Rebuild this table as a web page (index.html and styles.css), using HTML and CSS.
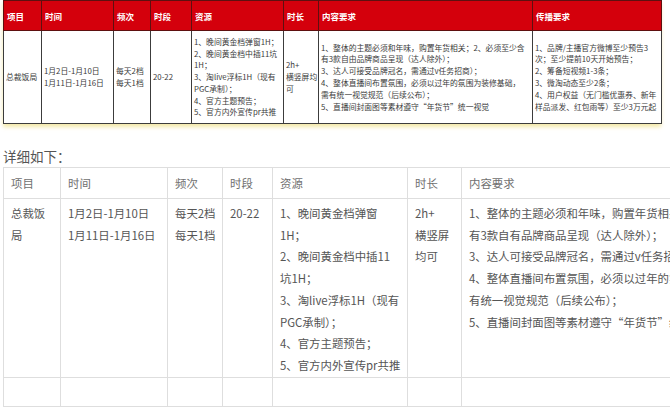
FILE: index.html
```html
<!DOCTYPE html>
<html lang="zh">
<head>
<meta charset="utf-8">
<link rel="stylesheet" href="styles.css">
</head>
<body>
<div class="page">
  <div class="plan-wrap">
    <table class="plan">
      <colgroup>
        <col class="c1"><col class="c2"><col class="c3"><col class="c4"><col class="c5"><col class="c6"><col class="c7"><col class="c8">
      </colgroup>
      <thead>
        <tr>
          <th>项目</th><th>时间</th><th>频次</th><th>时段</th><th>资源</th><th>时长</th><th>内容要求</th><th>传播要求</th>
        </tr>
      </thead>
      <tbody>
        <tr>
          <td>总裁饭局</td>
          <td>1月2日-1月10日<br>1月11日-1月16日</td>
          <td>每天2档<br>每天1档</td>
          <td>20-22</td>
          <td>1、晚间黄金档弹窗1H；<br>2、晚间黄金档中插11坑<br>1H；<br>3、淘live浮标1H（现有<br>PGC承制）；<br>4、官方主题预告；<br>5、官方内外宣传pr共推</td>
          <td>2h+<br>横竖屏均<br>可</td>
          <td>1、整体的主题必须和年味，购置年货相关；2、必须至少含<br>有3款自由品牌商品呈现（达人除外）；<br>3、达人可接受品牌冠名，需通过v任务招商）；<br>4、整体直播间布置氛围，必须以过年的氛围为装修基础，<br>需有统一视觉规范（后续公布）；<br>5、直播间封面图等素材遵守“年货节”统一视觉</td>
          <td>1、品牌/主播官方微博至少预告3<br>次；至少提前10天开始预告；<br>2、筹备短视频1-3条；<br>3、微淘动态至少2条；<br>4、用户权益（无门槛优惠券、新年<br>样品派发、红包雨等）至少3万元起</td>
        </tr>
      </tbody>
    </table>
  </div>

  <p class="intro">详细如下：</p>

  <table class="detail">
    <colgroup>
      <col class="d1"><col class="d2"><col class="d3"><col class="d4"><col class="d5"><col class="d6"><col class="d7"><col class="d8">
    </colgroup>
    <thead>
      <tr>
        <th>项目</th><th>时间</th><th>频次</th><th>时段</th><th>资源</th><th>时长</th><th>内容要求</th><th>传播要求</th>
      </tr>
    </thead>
    <tbody>
      <tr class="main-row">
        <td>总裁饭<br>局</td>
        <td>1月2日-1月10日<br>1月11日-1月16日</td>
        <td>每天2档<br>每天1档</td>
        <td>20-22</td>
        <td>1、晚间黄金档弹窗<br>1H；<br>2、晚间黄金档中插11<br>坑1H；<br>3、淘live浮标1H（现有<br>PGC承制）；<br>4、官方主题预告；<br>5、官方内外宣传pr共推</td>
        <td>2h+<br>横竖屏<br>均可</td>
        <td>1、整体的主题必须和年味，购置年货相关；2、必须至少含<br>有3款自有品牌商品呈现（达人除外）；<br>3、达人可接受品牌冠名，需通过v任务招商）；<br>4、整体直播间布置氛围，必须以过年的氛围为装修基础，<br>有统一视觉规范（后续公布）；<br>5、直播间封面图等素材遵守“年货节”统一视觉</td>
        <td>1、品牌/主播官方微博至少预告3次；</td>
      </tr>
      <tr class="empty-row">
        <td></td><td></td><td></td><td></td><td></td><td></td><td></td><td></td>
      </tr>
    </tbody>
  </table>
</div>
</body>
</html>
```

FILE: styles.css
```css
html, body {
  margin: 0;
  padding: 0;
  background: #ffffff;
  overflow: hidden;
}

body {
  font-family: "Noto Sans CJK SC", "Noto Sans", "Liberation Sans", sans-serif;
}

.page {
  width: 900px;
  padding-left: 3px;
}

/* ---------- Top (image-like) plan table ---------- */
.plan-wrap {
  width: 658px;
  box-shadow: 0 3px 4px rgba(240, 226, 140, 0.75);
}

.plan {
  width: 658px;
  table-layout: fixed;
  border-collapse: collapse;
  font-size: 7.8px;
  color: #3a3a3a;
}

.plan .c1 { width: 38px; }
.plan .c2 { width: 72px; }
.plan .c3 { width: 37px; }
.plan .c4 { width: 41px; }
.plan .c5 { width: 92px; }
.plan .c6 { width: 35px; }
.plan .c7 { width: 214px; }
.plan .c8 { width: 129px; }

.plan th {
  height: 29px;
  background: #d4000c;
  color: #ffffff;
  font-size: 8.5px;
  font-weight: bold;
  text-align: left;
  padding: 0 3px;
  border: 1px solid #5e1010;
  white-space: nowrap;
  overflow: hidden;
}

.plan td {
  height: 92px;
  padding: 0 2px;
  border: 1px solid #3c3c3c;
  line-height: 11.8px;
  vertical-align: middle;
  white-space: nowrap;
  overflow: hidden;
}

/* ---------- Intro text ---------- */
.intro {
  margin: 21px 0 0;
  font-size: 13.5px;
  line-height: 22px;
  color: #555555;
}

/* ---------- Detail table ---------- */
.detail {
  table-layout: fixed;
  border-collapse: collapse;
  width: 858px;
  font-size: 11.4px;
  color: #555555;
}

.detail .d1 { width: 57px; }
.detail .d2 { width: 107px; }
.detail .d3 { width: 55px; }
.detail .d4 { width: 50px; }
.detail .d5 { width: 135px; }
.detail .d6 { width: 54px; }
.detail .d7 { width: 300px; }
.detail .d8 { width: 100px; }

.detail th {
  height: 30px;
  padding: 0 7px;
  border: 1px solid #dedede;
  text-align: left;
  font-weight: normal;
  color: #707070;
  vertical-align: middle;
  white-space: nowrap;
  overflow: hidden;
}

.detail td {
  padding: 4px 7px 0;
  border: 1px solid #dedede;
  line-height: 21.7px;
  vertical-align: top;
  white-space: nowrap;
  overflow: hidden;
}

.detail .empty-row td {
  height: 28px;
  padding: 0;
}
```
